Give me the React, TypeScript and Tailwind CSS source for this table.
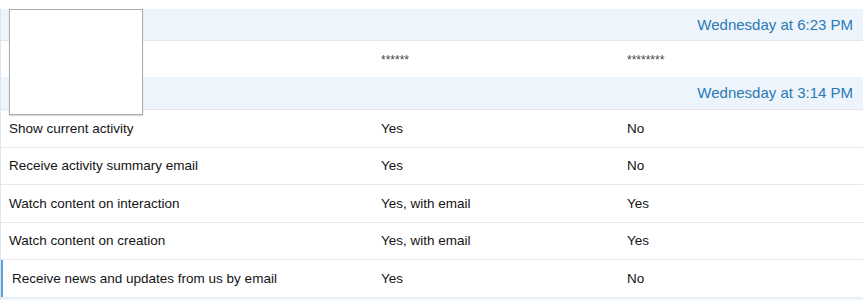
import React from "react";

const prefs = [
    { label: "Show current activity", a: "Yes", b: "No", h: "h-[38px]" },
    { label: "Receive activity summary email", a: "Yes", b: "No", h: "h-[37px]" },
    { label: "Watch content on interaction", a: "Yes, with email", b: "Yes", h: "h-[38px]" },
    { label: "Watch content on creation", a: "Yes, with email", b: "Yes", h: "h-[37px]" },
];

export default function App() {
    return (
        <div className="relative w-[863px] h-[300px] overflow-hidden bg-white font-['Liberation_Sans',Arial,sans-serif] text-[13.5px] text-[#141414]">
            <div className="h-[9px]" />
            <div className="border-l border-[#dde5ee]">
                {/* Compared row headers */}
                <div className="flex h-[32px] items-center justify-end border-b border-[#dfe6ee] bg-[#edf4fc] pt-[1px] pr-[10px] text-[15px] text-[#2a7ab5]">
                    Wednesday at 6:23 PM
                </div>
                <div className="grid h-[36px] grid-cols-[380px_246px_1fr] items-center pt-[2px] text-[12px] text-[#444]">
                    <div />
                    <div>******</div>
                    <div>********</div>
                </div>
                <div className="flex h-[33px] items-center justify-end border-b border-[#dfe6ee] bg-[#edf4fc] pt-[1px] pr-[10px] text-[15px] text-[#2a7ab5]">
                    Wednesday at 3:14 PM
                </div>

                {/* Preference rows */}
                {prefs.map((p) => (
                    <div
                        key={p.label}
                        className={`grid ${p.h} grid-cols-[380px_246px_1fr] items-center border-b border-[#e6eaef] pt-[1px]`}
                    >
                        <div className="pl-[8px]">{p.label}</div>
                        <div>{p.a}</div>
                        <div>{p.b}</div>
                    </div>
                ))}
                <div className="grid h-[38px] grid-cols-[380px_246px_1fr] items-center border-b border-[#e6eaef]">
                    <div className="flex h-full items-center border-l-2 border-[#5aa2dc] pt-[1px] pl-[9px]">
                        Receive news and updates from us by email
                    </div>
                    <div className="pt-[1px]">Yes</div>
                    <div className="pt-[1px]">No</div>
                </div>
                <div className="h-[10px] bg-[#edf4fc]" />
            </div>

            {/* Floating blank panel */}
            <div className="absolute left-[9px] top-[9px] h-[106px] w-[134px] border border-[#adadad] bg-white shadow-[0_1px_1px_rgba(0,0,0,0.15)]" />
        </div>
    );
}
